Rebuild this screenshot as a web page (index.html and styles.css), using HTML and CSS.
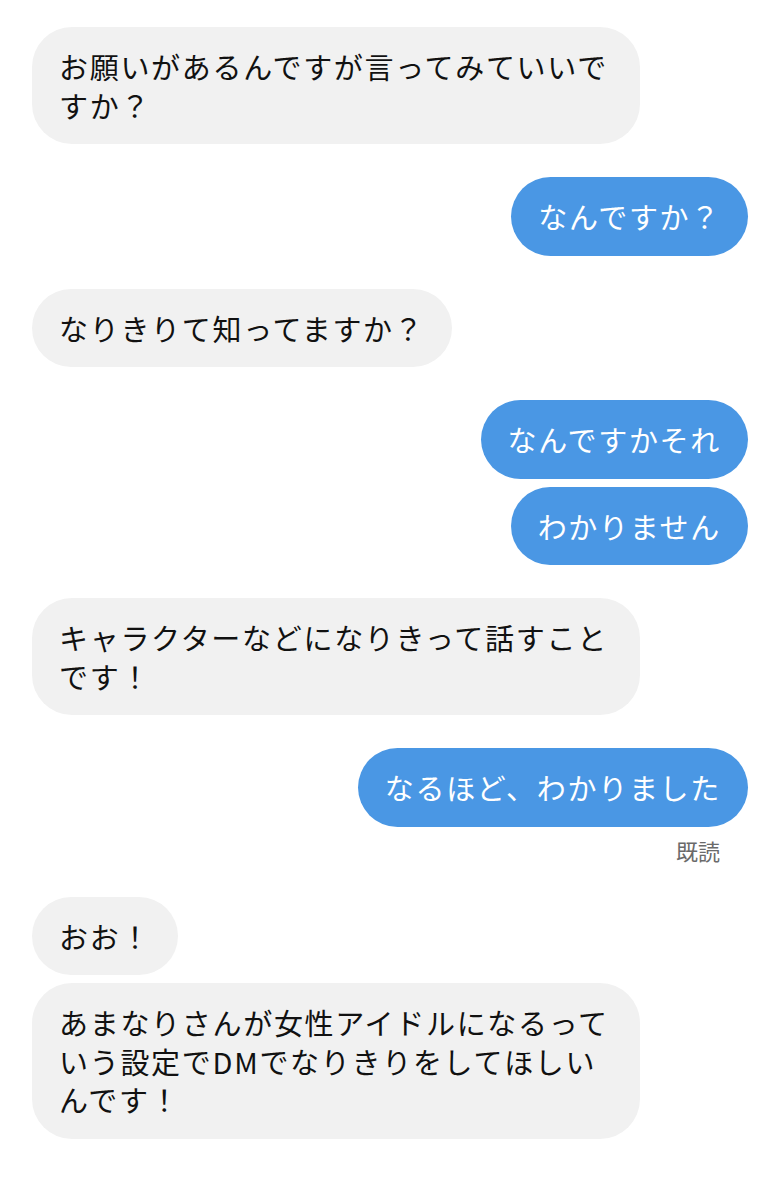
FILE: index.html
```html
<!DOCTYPE html>
<html lang="ja">
<head>
    <meta charset="UTF-8">
    <title>DM</title>
    <link rel="stylesheet" href="styles.css">
</head>
<body>
    <div class="chat">
        <div class="group them">
            <div class="bubble">お願いがあるんですが言ってみていいですか？</div>
        </div>

        <div class="group me">
            <div class="bubble">なんですか？</div>
        </div>

        <div class="group them">
            <div class="bubble">なりきりて知ってますか？</div>
        </div>

        <div class="group me">
            <div class="bubble">なんですかそれ</div>
            <div class="bubble">わかりません</div>
        </div>

        <div class="group them">
            <div class="bubble">キャラクターなどになりきって話すことです！</div>
        </div>

        <div class="group me">
            <div class="bubble">なるほど、わかりました</div>
            <div class="read">既読</div>
        </div>

        <div class="group them">
            <div class="bubble">おお！</div>
            <div class="bubble">あまなりさんが女性アイドルになるっていう設定でDMでなりきりをしてほしいんです！</div>
        </div>
    </div>
</body>
</html>
```

FILE: styles.css
```css
body {
    margin: 0;
    padding: 0;
    background-color: #ffffff;
    font-family: "Noto Sans CJK JP", "Noto Sans", sans-serif;
    color: #111111;
}
.chat {
    display: flex;
    flex-direction: column;
    gap: 33px;
    padding: 27px 32px;
}
.group {
    display: flex;
    flex-direction: column;
    gap: 8px;
}
.them {
    align-items: flex-start;
}
.me {
    align-items: flex-end;
}
.bubble {
    box-sizing: border-box;
    max-width: 608px;
    padding: 20px 27px;
    border-radius: 40px;
    font-size: 29px;
    line-height: 38.5px;
    letter-spacing: 1.7px;
}
.them .bubble {
    background-color: #f1f1f1;
}
.me .bubble {
    background-color: #4a97e4;
    color: #ffffff;
}
.read {
    margin-top: 1px;
    padding-right: 28px;
    font-size: 22px;
    line-height: 28px;
    color: #6a6a6a;
}
```
